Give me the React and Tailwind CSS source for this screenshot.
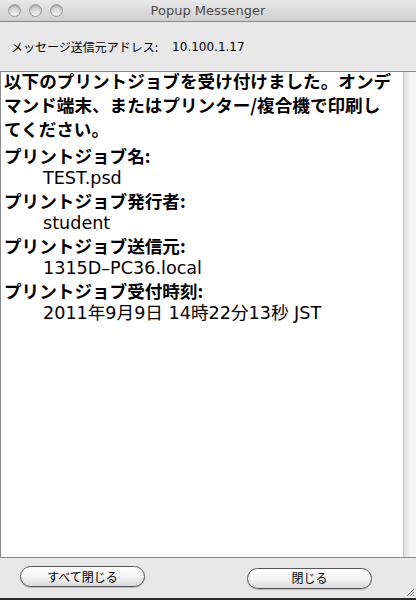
import React from 'react';

const jp = { fontFamily: '"Noto Sans CJK JP", "DejaVu Sans", sans-serif' };

const Light = ({ className }) => (
  <div className={`h-[13px] w-[13px] rounded-full border border-[#9a9a9a] bg-gradient-to-b from-[#c8c8c8] to-[#f2f2f2] shadow-[inset_0_1px_2px_rgba(0,0,0,0.25)] ${className}`}></div>
);

const Field = ({ label, value }) => (
  <>
    <div className="font-bold leading-[22px]">{label}</div>
    <div className="pl-[39px] leading-[23px]" style={{ fontFamily: '"DejaVu Sans", "Noto Sans CJK JP", sans-serif' }}>{value}</div>
  </>
);

const Button = ({ children }) => (
  <button className="h-[21px] w-[125px] rounded-full border border-[#555] bg-gradient-to-b from-white via-[#f4f4f4] to-[#dcdcdc] text-[12px] text-black shadow-[0_1px_1px_rgba(0,0,0,0.2)]">
    {children}
  </button>
);

export default function App() {
  return (
    <div className="flex h-[600px] w-[416px] flex-col bg-[#e8e8e8] text-black" style={jp}>
      <div className="relative flex h-[22px] items-center justify-center border-b border-[#888] bg-gradient-to-b from-[#e9e9e9] to-[#cfcfcf]">
        <div className="absolute left-[8px] top-[4px] flex gap-[8px]">
          <Light />
          <Light />
          <Light />
        </div>
        <span className="text-[13px] text-[#4a4a4a]" style={{ fontFamily: '"DejaVu Sans", sans-serif' }}>Popup Messenger</span>
      </div>

      <div className="flex h-[49px] items-center gap-[14px] pl-[11px] text-[12px]">
        <span>メッセージ送信元アドレス:</span>
        <span style={{ fontFamily: '"DejaVu Sans", sans-serif' }}>10.100.1.17</span>
      </div>

      <div className="flex h-[487px] border-y border-l border-[#8a8a8a]">
        <div className="flex-1 bg-white px-[3px] text-[17.6px]">
          <p className="-mt-[3px] font-bold leading-[24px]">
            以下のプリントジョブを受け付けました。オンデ<br />
            マンド端末、またはプリンター/複合機で印刷し<br />
            てください。
          </p>
          <div className="mt-[4px]">
            <Field label="プリントジョブ名:" value="TEST.psd" />
            <Field label="プリントジョブ発行者:" value="student" />
            <Field label="プリントジョブ送信元:" value="1315D–PC36.local" />
            <Field label="プリントジョブ受付時刻:" value="2011年9月9日 14時22分13秒 JST" />
          </div>
        </div>
        <div className="w-[13px] border-l border-[#c8c8c8] bg-gradient-to-r from-[#dedede] via-[#f4f4f4] to-[#f8f8f8]"></div>
      </div>

      <div className="relative flex flex-1 items-center border-b-2 border-[#2a2a2a] pb-[3px] pl-[20px]">
        <Button>すべて閉じる</Button>
        <div className="ml-[102px]">
          <Button>閉じる</Button>
        </div>
        <svg className="absolute bottom-[1px] right-[1px]" width="10" height="10" viewBox="0 0 10 10">
          <path d="M9 2 L2 9 M9 5 L5 9 M9 8 L8 9" stroke="#888" strokeWidth="1" />
        </svg>
      </div>
    </div>
  );
}
